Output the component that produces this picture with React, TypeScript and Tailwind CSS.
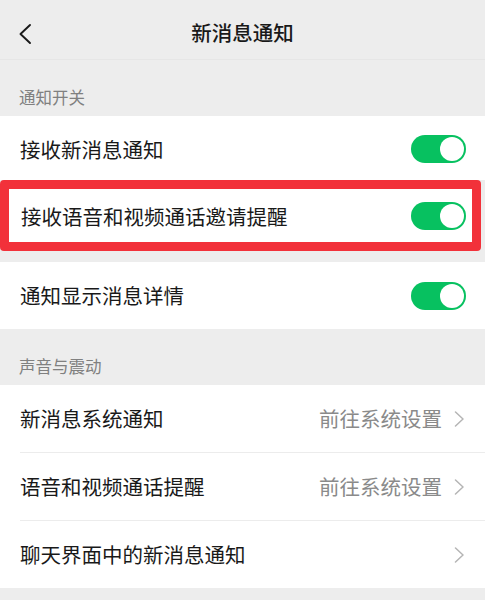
const font = { fontFamily: '"Noto Sans CJK SC", "Noto Sans", sans-serif' };

function Toggle() {
  return (
    <div className="flex h-[28px] w-[55px] items-center justify-end rounded-full bg-[#07c160] px-[2px]">
      <div className="h-[24px] w-[24px] rounded-full bg-white" />
    </div>
  );
}

function Arrow() {
  return (
    <svg width="11" height="16" viewBox="0 0 11 16" fill="none" className="text-[#b5b5b5]">
      <polyline points="1.5,1 9,8 1.5,15" stroke="currentColor" strokeWidth="1.5" strokeLinecap="round" strokeLinejoin="round" />
    </svg>
  );
}

function SwitchRow({ label, className = '' }: { label: string; className?: string }) {
  return (
    <div className={`flex items-center justify-between bg-white pl-[20px] pr-[19px] ${className}`}>
      <span className="text-[20.5px] leading-none text-[#191919]">{label}</span>
      <Toggle />
    </div>
  );
}

function LinkRow({ label, value, divider, h }: { label: string; value?: string; divider?: boolean; h: string }) {
  return (
    <div className="bg-white pl-[20px]">
      <div
        className={`flex items-center justify-between pr-[20px] ${h} ${
          divider ? 'border-b border-[#ececec]' : ''
        }`}
      >
        <span className="text-[20.5px] leading-none text-[#191919]">{label}</span>
        <div className="flex items-center gap-[12px]">
          {value && <span className="text-[20.5px] leading-none text-[#8a8a8a]">{value}</span>}
          <Arrow />
        </div>
      </div>
    </div>
  );
}

export default function App() {
  return (
    <div className="flex h-[600px] w-[485px] flex-col overflow-hidden bg-[#ededed]" style={font}>
      {/* Header */}
      <div className="relative flex h-[60px] items-center justify-center border-b border-[#e6e6e6]">
        <svg
          width="14"
          height="22"
          viewBox="0 0 14 22"
          fill="none"
          className="absolute left-[18px] top-[23px] text-[#191919]"
        >
          <polyline points="12,2 2.5,11 12,20" stroke="currentColor" strokeWidth="1.9" strokeLinecap="round" strokeLinejoin="round" />
        </svg>
        <span className="mt-[6px] text-[20.5px] font-medium text-[#191919]">新消息通知</span>
      </div>

      {/* 通知开关 */}
      <div className="flex h-[56px] items-end pb-[11px] pl-[19px] text-[16.5px] leading-none text-[#808080]">
        通知开关
      </div>
      <SwitchRow label="接收新消息通知" className="h-[64px] pt-[2px]" />

      <div className="mr-[4px] h-[71px] rounded-[4px] border-[9px] border-[#f2313a] bg-white">
        <div className="flex h-full items-center justify-between pl-[12px] pr-[6px] pt-[1px]">
          <span className="text-[20.5px] leading-none text-[#191919]">接收语音和视频通话邀请提醒</span>
          <Toggle />
        </div>
      </div>

      <div className="h-[11px]" />
      <SwitchRow label="通知显示消息详情" className="h-[67px]" />

      {/* 声音与震动 */}
      <div className="flex h-[56px] items-end pb-[11px] pl-[19px] text-[16.5px] leading-none text-[#808080]">
        声音与震动
      </div>
      <LinkRow label="新消息系统通知" value="前往系统设置" divider h="h-[68px]" />
      <LinkRow label="语音和视频通话提醒" value="前往系统设置" divider h="h-[68px]" />
      <LinkRow label="聊天界面中的新消息通知" h="h-[67px]" />
    </div>
  );
}
